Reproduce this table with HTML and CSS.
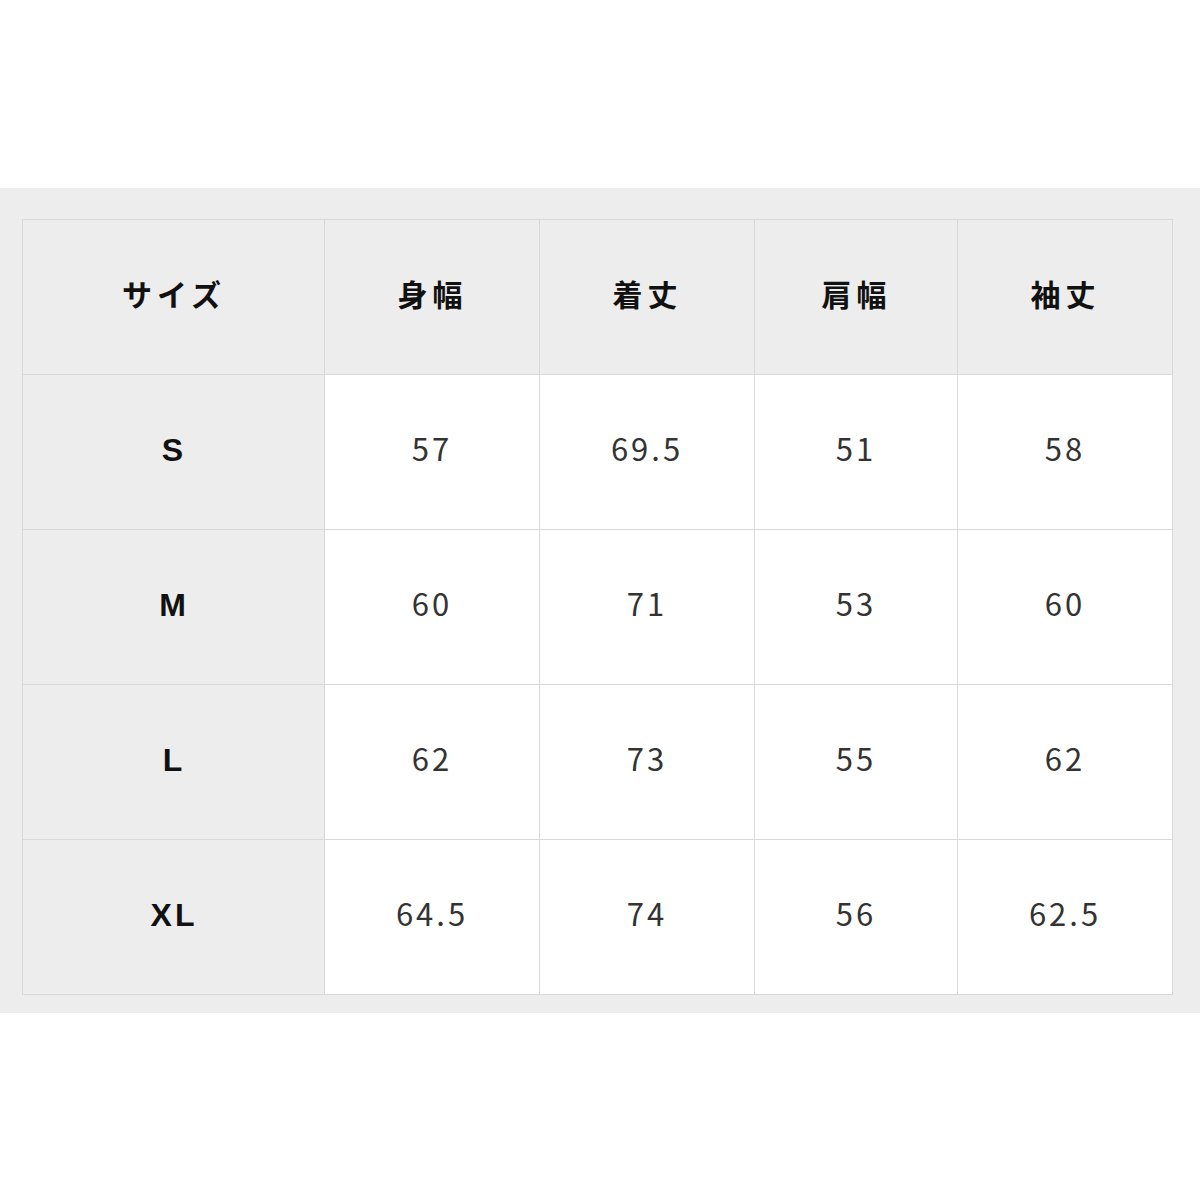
FILE: index.html
```html
<!DOCTYPE html>
<html lang="ja">
<head>
<meta charset="utf-8">
<link rel="stylesheet" href="styles.css">
</head>
<body>
<div class="top-space"></div>
<section class="band">
  <table class="size-table">
    <colgroup>
      <col class="c-size"><col class="c-w"><col class="c-w"><col class="c-n"><col class="c-w">
    </colgroup>
    <thead>
      <tr>
        <th>サイズ</th><th>身幅</th><th>着丈</th><th>肩幅</th><th>袖丈</th>
      </tr>
    </thead>
    <tbody>
      <tr><th>S</th><td>57</td><td>69.5</td><td>51</td><td>58</td></tr>
      <tr><th>M</th><td>60</td><td>71</td><td>53</td><td>60</td></tr>
      <tr><th>L</th><td>62</td><td>73</td><td>55</td><td>62</td></tr>
      <tr><th>XL</th><td>64.5</td><td>74</td><td>56</td><td>62.5</td></tr>
    </tbody>
  </table>
</section>
<div class="bottom-space"></div>
</body>
</html>
```
FILE: styles.css
```css
html, body {
  margin: 0;
  padding: 0;
  background: #ffffff;
}
body {
  width: 1200px;
  height: 1200px;
  font-family: "Noto Sans CJK JP", "Liberation Sans", sans-serif;
}
.top-space {
  height: 188px;
}
.band {
  background: #ededed;
  padding: 31px 28px 18px 22px;
}
.size-table {
  border-collapse: collapse;
  width: 1150px;
  table-layout: fixed;
}
.c-size { width: 302px; }
.c-w { width: 215px; }
.c-n { width: 203px; }
.size-table th,
.size-table td {
  border: 1px solid #d8d8d8;
  padding: 0;
  text-align: center;
  vertical-align: middle;
}
.size-table thead th {
  height: 145px;
  background: #ededed;
  color: #111;
  font-family: "Noto Sans CJK JP", sans-serif;
  font-weight: 700;
  font-size: 30px;
  letter-spacing: 5px;
  text-indent: 1px;
  padding-bottom: 9px;
}
.size-table tbody th {
  height: 150px;
  background: #ededed;
  color: #111;
  font-family: "Liberation Sans", Arial, sans-serif;
  font-weight: 700;
  font-size: 32px;
  letter-spacing: 3px;
  text-indent: 1px;
  padding-bottom: 4px;
}
.size-table td {
  height: 144px;
  background: #ffffff;
  color: #333;
  font-family: "Noto Sans CJK JP", sans-serif;
  font-weight: 400;
  font-size: 31px;
  letter-spacing: 3px;
  text-indent: 0;
  padding-bottom: 10px;
}
```
